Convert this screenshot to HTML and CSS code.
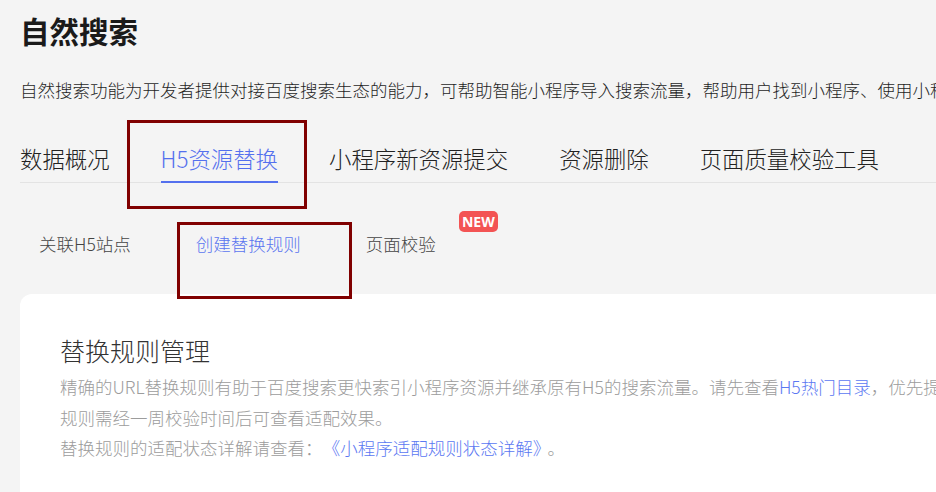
FILE: index.html
```html
<!DOCTYPE html>
<html lang="zh-CN">
<head>
<meta charset="utf-8">
<title>自然搜索</title>
<link rel="stylesheet" href="styles.css">
</head>
<body>
<div class="page">
  <h1 class="title">自然搜索</h1>
  <p class="desc">自然搜索功能为开发者提供对接百度搜索生态的能力，可帮助智能小程序导入搜索流量，帮助用户找到小程序、使用小程序，提升小程序的曝光和流量。</p>

  <nav class="tabs">
    <span class="tab">数据概况</span>
    <span class="tab active">H5资源替换</span>
    <span class="tab">小程序新资源提交</span>
    <span class="tab">资源删除</span>
    <span class="tab">页面质量校验工具</span>
  </nav>

  <nav class="subtabs">
    <span class="subtab">关联H5站点</span>
    <span class="subtab active">创建替换规则</span>
    <span class="subtab has-badge">页面校验<span class="badge">NEW</span></span>
  </nav>

  <section class="card">
    <h2 class="card-title">替换规则管理</h2>
    <div class="card-text">
      <div class="line">精确的URL替换规则有助于百度搜索更快索引小程序资源并继承原有H5的搜索流量。请先查看<a class="link">H5热门目录</a>，优先提交热门页面的替换规则，</div>
      <div class="line">规则需经一周校验时间后可查看适配效果。</div>
      <div class="line">替换规则的适配状态详解请查看：<a class="link link-doc">《小程序适配规则状态详解》</a><span class="end">。</span></div>
    </div>
  </section>
</div>
<div class="mark mark-tab"></div>
<div class="mark mark-subtab"></div>
</body>
</html>
```

FILE: styles.css
```css
html, body {
  margin: 0;
  padding: 0;
}
body {
  background: #f4f4f4;
  width: 936px;
  height: 492px;
  overflow: hidden;
  position: relative;
  font-family: "Noto Sans CJK SC", "Noto Sans", sans-serif;
  color: #222;
}
.page {
  padding: 10px 0 0 20px;
}
.title {
  margin: 0;
  font-size: 29.5px;
  line-height: 40px;
  font-weight: 700;
  color: #1a1a1a;
}
.desc {
  margin: 27px 0 0 0;
  font-size: 17.5px;
  line-height: 26px;
  font-weight: 300;
  white-space: nowrap;
  color: #1f1f1f;
}
.tabs {
  margin-top: 40px;
  display: flex;
  gap: 51px;
  border-bottom: 1px solid #e3e3e3;
  width: 1200px;
}
.tab {
  font-size: 22.4px;
  line-height: 30px;
  font-weight: 300;
  padding-bottom: 8px;
  border-bottom: 2px solid transparent;
  color: #222;
  margin-bottom: -1px;
}
.tab.active {
  color: #5470ee;
  border-bottom-color: #5470ee;
}
.subtabs {
  display: flex;
  gap: 65px;
  padding: 48px 0 0 19px;
}
.subtab {
  font-size: 17.5px;
  line-height: 26px;
  font-weight: 300;
  color: #444;
}
.subtab.active {
  color: #5b76f0;
}
.has-badge {
  position: relative;
}
.badge {
  position: absolute;
  left: 93px;
  top: -20px;
  width: 39px;
  height: 21px;
  border-radius: 5px;
  background: #f35454;
  color: #fff;
  font-family: "Noto Sans", sans-serif;
  font-size: 14px;
  font-weight: 700;
  line-height: 21px;
  text-align: center;
}
.card {
  margin-top: 37px;
  width: 1100px;
  height: 260px;
  background: #fff;
  border-radius: 12px;
  padding: 38px 0 0 40px;
  box-sizing: border-box;
}
.card-title {
  margin: 0;
  font-size: 25px;
  font-weight: 300;
  line-height: 36px;
  color: #333;
}
.card-text {
  margin-top: 4px;
  font-size: 17.5px;
  line-height: 30.5px;
  font-weight: 300;
  color: #9c9c9c;
}
.line {
  white-space: nowrap;
}
.link {
  color: #5b78f2;
}
.link-doc {
  margin-left: 9px;
}
.end {
  margin-left: 6px;
}
.mark {
  position: absolute;
  border: 3px solid #800000;
  box-sizing: border-box;
  z-index: 5;
}
.mark-tab {
  left: 127px;
  top: 120px;
  width: 180px;
  height: 89px;
}
.mark-subtab {
  left: 177px;
  top: 222px;
  width: 175px;
  height: 77px;
}
```
